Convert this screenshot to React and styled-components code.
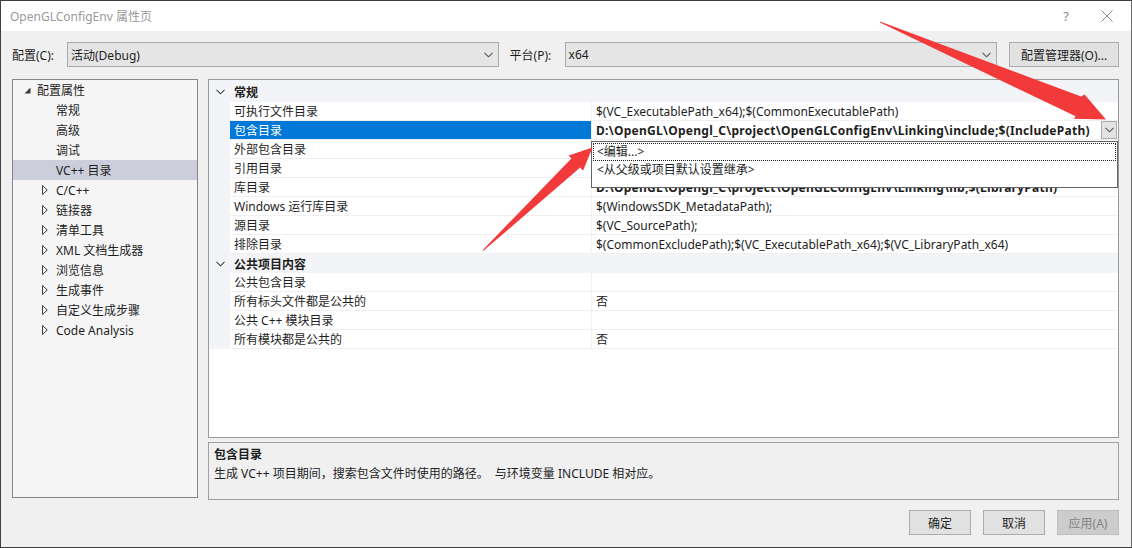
import React from "react";
import styled, { createGlobalStyle } from "styled-components";

const GlobalStyle = createGlobalStyle`
  html, body {
    margin: 0;
    padding: 0;
    background: #f0f0f0;
  }
  body {
    font-family: "Noto Sans", "Noto Sans CJK SC", sans-serif;
    font-size: 12px;
    color: #1e1e1e;
  }
  * {
    box-sizing: border-box;
  }
`;

const treeItems = [
  { label: "配置属性", level: 0, expanded: true },
  { label: "常规", level: 1 },
  { label: "高级", level: 1 },
  { label: "调试", level: 1 },
  { label: "VC++ 目录", level: 1, selected: true },
  { label: "C/C++", level: 1, collapsed: true },
  { label: "链接器", level: 1, collapsed: true },
  { label: "清单工具", level: 1, collapsed: true },
  { label: "XML 文档生成器", level: 1, collapsed: true },
  { label: "浏览信息", level: 1, collapsed: true },
  { label: "生成事件", level: 1, collapsed: true },
  { label: "自定义生成步骤", level: 1, collapsed: true },
  { label: "Code Analysis", level: 1, collapsed: true },
];

// values of rows hidden under the open drop-down are left empty
const groups = [
  {
    title: "常规",
    rows: [
      ["可执行文件目录", "$(VC_ExecutablePath_x64);$(CommonExecutablePath)"],
      ["包含目录", "D:\\OpenGL\\Opengl_C\\project\\OpenGLConfigEnv\\Linking\\include;$(IncludePath)", "selected"],
      ["外部包含目录", ""],
      ["引用目录", ""],
      ["库目录", "D:\\OpenGL\\Opengl_C\\project\\OpenGLConfigEnv\\Linking\\lib;$(LibraryPath)", "bold"],
      ["Windows 运行库目录", "$(WindowsSDK_MetadataPath);"],
      ["源目录", "$(VC_SourcePath);"],
      ["排除目录", "$(CommonExcludePath);$(VC_ExecutablePath_x64);$(VC_LibraryPath_x64)"],
    ],
  },
  {
    title: "公共项目内容",
    rows: [
      ["公共包含目录", ""],
      ["所有标头文件都是公共的", "否"],
      ["公共 C++ 模块目录", ""],
      ["所有模块都是公共的", "否"],
    ],
  },
];

const Chevron = ({ color = "#555" }) => (
  <svg width="9" height="6" viewBox="0 0 9 6">
    <path d="M0.5 0.8 L4.5 4.8 L8.5 0.8" fill="none" stroke={color} strokeWidth="1.1" />
  </svg>
);

const Expanded = () => (
  <svg width="7" height="7" viewBox="0 0 7 7">
    <path d="M6.5 0.5 L6.5 6.5 L0.5 6.5 Z" fill="#3c3c3c" />
  </svg>
);

const Collapsed = () => (
  <svg width="6" height="10" viewBox="0 0 6 10">
    <path d="M0.5 0.5 L5.3 5 L0.5 9.5 Z" fill="none" stroke="#3c3c3c" strokeWidth="1" />
  </svg>
);

const App = () => {
  return (
    <>
      <GlobalStyle />
      <Window>
        <TitleBar>
          <Title>OpenGLConfigEnv 属性页</Title>
          <TitleButtons>
            <TitleGlyph>?</TitleGlyph>
            <svg width="12" height="12" viewBox="0 0 12 12">
              <path d="M0.5 0.5 L11.5 11.5 M11.5 0.5 L0.5 11.5" stroke="#8a8a8a" strokeWidth="1" />
            </svg>
          </TitleButtons>
        </TitleBar>
        <Body>
          <TopRow>
            <Label>配置(C):</Label>
            <Combo $width={432}>
              <span>活动(Debug)</span>
              <Chevron />
            </Combo>
            <Label $gap>平台(P):</Label>
            <Combo $width={433}>
              <span>x64</span>
              <Chevron />
            </Combo>
            <Button $width={110} $left={12}>配置管理器(O)...</Button>
          </TopRow>
          <Main>
            <Tree>
              {treeItems.map((item) => (
                <TreeRow key={item.label} $selected={item.selected}>
                  <TreeToggle $level={item.level}>
                    {item.expanded && <Expanded />}
                    {item.collapsed && <Collapsed />}
                  </TreeToggle>
                  <span>{item.label}</span>
                </TreeRow>
              ))}
            </Tree>
            <RightColumn>
              <Grid>
                {groups.map((group, gi) => (
                  <React.Fragment key={group.title}>
                    <CategoryRow $first={gi === 0}>
                      <Gutter>
                        <Chevron color="#444" />
                      </Gutter>
                      <CategoryTitle>{group.title}</CategoryTitle>
                    </CategoryRow>
                    {group.rows.map(([name, value, kind]) => (
                      <PropRow key={name}>
                        <Gutter />
                        <NameCell $selected={kind === "selected"}>{name}</NameCell>
                        <ValueCell $bold={kind === "selected" || kind === "bold"}>
                          <ValueText>{value}</ValueText>
                          {kind === "selected" && (
                            <>
                              <DropButton>
                                <Chevron />
                              </DropButton>
                              <Popup>
                                <PopupItem $focus>&lt;编辑...&gt;</PopupItem>
                                <PopupItem>&lt;从父级或项目默认设置继承&gt;</PopupItem>
                              </Popup>
                            </>
                          )}
                        </ValueCell>
                      </PropRow>
                    ))}
                  </React.Fragment>
                ))}
              </Grid>
              <Description>
                <DescTitle>包含目录</DescTitle>
                <div>生成 VC++ 项目期间，搜索包含文件时使用的路径。&nbsp;&nbsp;与环境变量 INCLUDE 相对应。</div>
              </Description>
            </RightColumn>
          </Main>
          <Footer>
            <Button $width={62}>确定</Button>
            <Button $width={62}>取消</Button>
            <Button $width={62} $disabled>应用(A)</Button>
          </Footer>
        </Body>
        <Annotations width="1132" height="548" viewBox="0 0 1132 548">
          <path
            d="M880 21.6 L1081.1 96.4 L1084.6 94.6 L1106 119.5 L1073.6 118.8 L1075.6 116.3 L880 22.4 Z"
            fill="#f23a3a"
          />
          <path
            d="M482.6 250.2 L571.4 158.4 L568.6 155.4 L592.5 147.5 L583 170.8 L580.2 167.6 L483.4 250.8 Z"
            fill="#f23a3a"
          />
        </Annotations>
      </Window>
    </>
  );
};

const Window = styled.div`
  position: relative;
  width: 1132px;
  height: 548px;
  border: 1px solid #3f3f3f;
  border-right-color: #6a6a6a;
  display: flex;
  flex-direction: column;
  overflow: hidden;
`;

const TitleBar = styled.div`
  height: 30px;
  background: #ffffff;
  display: flex;
  align-items: center;
  justify-content: space-between;
  padding: 0 18px 0 9px;
`;

const Title = styled.div`
  color: #9a9a9a;
  font-size: 12px;
`;

const TitleButtons = styled.div`
  display: flex;
  align-items: center;
  gap: 32px;
`;

const TitleGlyph = styled.span`
  color: #8a8a8a;
  font-size: 13px;
`;

const Body = styled.div`
  flex: 1;
  background: #f0f0f0;
  padding: 11px 12px 0 11px;
  display: flex;
  flex-direction: column;
`;

const TopRow = styled.div`
  height: 25px;
  display: flex;
  align-items: center;
`;

const Label = styled.span`
  margin-left: ${(p) => (p.$gap ? "11px" : "0")};
  width: 55px;
  flex-shrink: 0;
`;

const Combo = styled.div`
  width: ${(p) => p.$width}px;
  height: 25px;
  background: #e5e5e5;
  border: 1px solid #acacac;
  display: flex;
  align-items: center;
  justify-content: space-between;
  padding: 0 5px 0 3px;
`;

const Button = styled.div`
  width: ${(p) => p.$width}px;
  height: 25px;
  margin-left: ${(p) => p.$left || 0}px;
  background: ${(p) => (p.$disabled ? "#cccccc" : "#e1e1e1")};
  border: 1px solid ${(p) => (p.$disabled ? "#bfbfbf" : "#adadad")};
  color: ${(p) => (p.$disabled ? "#838383" : "#1e1e1e")};
  display: flex;
  align-items: center;
  justify-content: center;
  white-space: nowrap;
`;

const Main = styled.div`
  margin-top: 12px;
  display: flex;
  gap: 10px;
  height: 421px;
`;

const Tree = styled.div`
  width: 186px;
  height: 419px;
  background: #f5f5f5;
  border: 1px solid #868690;
`;

const TreeRow = styled.div`
  height: 20px;
  display: flex;
  align-items: center;
  background: ${(p) => (p.$selected ? "#cccedb" : "transparent")};
`;

const TreeToggle = styled.span`
  width: ${(p) => (p.$level === 0 ? "24px" : "43px")};
  padding-left: ${(p) => (p.$level === 0 ? "11px" : "29px")};
  display: flex;
  align-items: center;
  flex-shrink: 0;
`;

const RightColumn = styled.div`
  flex: 1;
  display: flex;
  flex-direction: column;
  gap: 4px;
`;

const Grid = styled.div`
  height: 359px;
  background: #ffffff;
  border: 1px solid #9a9a9a;
  display: flex;
  flex-direction: column;
`;

const CategoryRow = styled.div`
  height: ${(p) => (p.$first ? "22px" : "19px")};
  padding-top: ${(p) => (p.$first ? "2px" : "0")};
  background: #f3f4f7;
  display: flex;
  align-items: center;
  flex-shrink: 0;
`;

const Gutter = styled.div`
  width: 21px;
  height: 100%;
  flex-shrink: 0;
  background: #f3f4f7;
  display: flex;
  align-items: center;
  justify-content: center;
  padding-left: 1px;
`;

const CategoryTitle = styled.span`
  font-weight: bold;
  padding-left: 4px;
`;

const PropRow = styled.div`
  height: 19px;
  display: flex;
  flex-shrink: 0;
`;

const NameCell = styled.div`
  width: 362px;
  flex-shrink: 0;
  height: 19px;
  line-height: 19px;
  padding-left: 4px;
  border-bottom: 1px solid #f0f0f0;
  border-right: 1px solid #f0f0f0;
  background: ${(p) => (p.$selected ? "#0078d7" : "#ffffff")};
  color: ${(p) => (p.$selected ? "#ffffff" : "#1e1e1e")};
  white-space: nowrap;
`;

const ValueCell = styled.div`
  position: relative;
  flex: 1;
  height: 19px;
  line-height: 19px;
  padding-left: 4px;
  border-bottom: 1px solid #f0f0f0;
  font-weight: ${(p) => (p.$bold ? "bold" : "normal")};
  letter-spacing: ${(p) => (p.$bold ? "0.27px" : "0")};
  display: flex;
  white-space: nowrap;
`;

const ValueText = styled.span`
  flex: 1;
  overflow: hidden;
`;

const DropButton = styled.div`
  width: 16px;
  height: 18px;
  margin-right: 1px;
  background: #e3e3e3;
  border: 1px solid #acacac;
  display: flex;
  align-items: center;
  justify-content: center;
`;

const Popup = styled.div`
  position: absolute;
  top: 20px;
  left: -1px;
  right: 0;
  height: 47px;
  background: #ffffff;
  border: 1px solid #646464;
  padding: 1px;
  font-weight: normal;
  letter-spacing: 0;
  line-height: 16px;
  z-index: 2;
`;

const PopupItem = styled.div`
  height: 18px;
  padding-left: 3px;
  border: 1px ${(p) => (p.$focus ? "dotted #1e1e1e" : "solid transparent")};
`;

const Description = styled.div`
  height: 58px;
  border: 1px solid #a0a0a0;
  padding: 2px 5px;
  line-height: 19px;
`;

const DescTitle = styled.div`
  font-weight: bold;
`;

const Footer = styled.div`
  margin-top: 10px;
  display: flex;
  justify-content: flex-end;
  gap: 12px;
`;

const Annotations = styled.svg`
  position: absolute;
  top: -1px;
  left: -1px;
  pointer-events: none;
  z-index: 5;
`;

export default App;
